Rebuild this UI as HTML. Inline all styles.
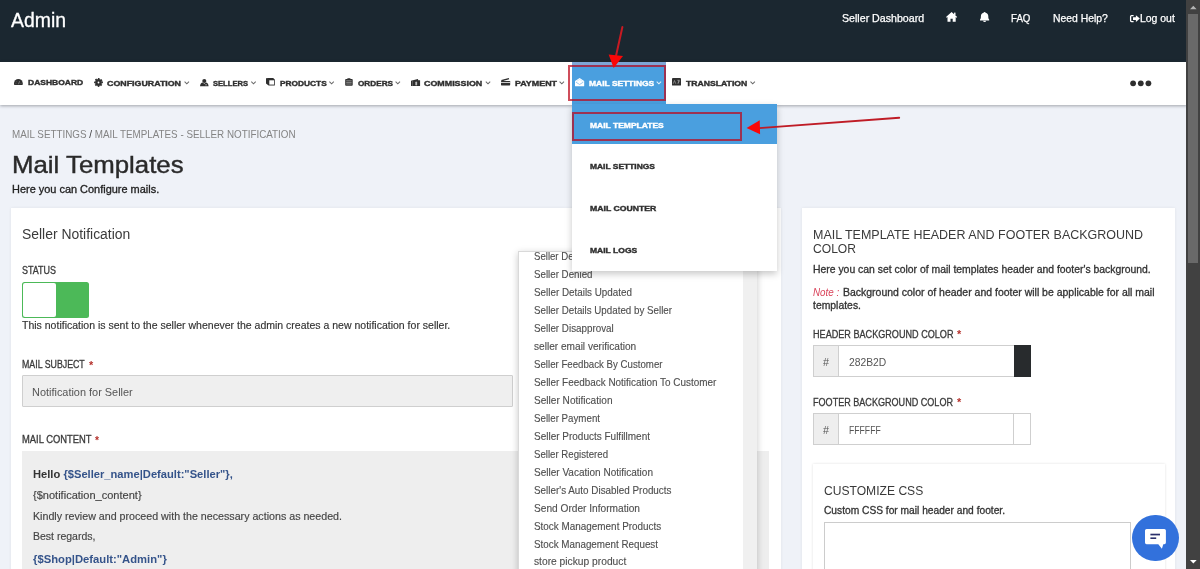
<!DOCTYPE html>
<html>
<head>
<meta charset="utf-8">
<title>Mail Templates</title>
<style>
*{box-sizing:border-box;margin:0;padding:0}
html,body{width:1200px;height:569px;overflow:hidden;background:#eff2f8;font-family:"Liberation Sans",sans-serif;color:#333}
.a{position:absolute}
.t{position:absolute;white-space:nowrap;transform-origin:0 0;line-height:1}
svg{position:absolute;overflow:visible}
</style>
</head>
<body>
<div id="wrap" style="position:absolute;left:0;top:0;width:1200px;height:569px;will-change:transform">
<!-- top bar -->
<div class="a" style="left:0;top:0;width:1187px;height:62px;background:#1b2730"></div>
<!-- nav bar -->
<div class="a" style="left:0;top:62px;width:1187px;height:42.5px;background:#fff;box-shadow:0 1px 3px rgba(40,45,55,.4)"></div>
<div class="a" style="left:572px;top:62px;width:93.7px;height:43px;background:#4a9fdf"></div>
<div class="a" style="left:572px;top:62px;width:93.7px;height:2.8px;background:#7ea6d6"></div>

<!-- left card -->
<div class="a" style="left:10.5px;top:208px;width:770px;height:380px;background:#fff;box-shadow:0 0 3px rgba(0,0,0,.07)"></div>
<!-- toggle -->
<div class="a" style="left:22.2px;top:281.7px;width:66.6px;height:36.4px;background:#4cb958;border-radius:2.5px"></div>
<div class="a" style="left:23.2px;top:282.7px;width:33px;height:34.4px;background:#fff;border-radius:2px"></div>
<!-- subject input -->
<div class="a" style="left:22px;top:374.5px;width:491px;height:32.5px;background:#efefef;border:1px solid #cfcfcf;border-radius:1px"></div>
<!-- content box -->
<div class="a" style="left:22px;top:450.6px;width:747px;height:130px;background:#eee"></div>

<!-- right card -->
<div class="a" style="left:802px;top:208px;width:373.4px;height:380px;background:#fff;box-shadow:0 0 3px rgba(0,0,0,.07)"></div>
<!-- header colour group -->
<div class="a" style="left:813.2px;top:344.5px;width:218px;height:32px;background:#fff;border:1px solid #cfcfcf"></div>
<div class="a" style="left:813.2px;top:344.5px;width:25.5px;height:32px;background:#eee;border:1px solid #cfcfcf"></div>
<div class="a" style="left:1013.7px;top:344.5px;width:17.6px;height:32px;background:#282b2d"></div>
<!-- footer colour group -->
<div class="a" style="left:813.2px;top:413.3px;width:218px;height:32px;background:#fff;border:1px solid #cfcfcf"></div>
<div class="a" style="left:813.2px;top:413.3px;width:25.5px;height:32px;background:#eee;border:1px solid #cfcfcf"></div>
<div class="a" style="left:1013.2px;top:413.3px;width:18px;height:32px;background:#fff;border:1px solid #cfcfcf"></div>
<!-- customize css inner card -->
<div class="a" style="left:812.5px;top:463.6px;width:352px;height:130px;background:#fff;box-shadow:0 0 2.5px rgba(0,0,0,.13)"></div>
<div class="a" style="left:824px;top:522px;width:307px;height:70px;background:#fff;border:1px solid #ccc"></div>

<!-- select list panel -->
<div class="a" style="left:517.8px;top:250.6px;width:239.5px;height:330px;background:#fff;border:1px solid #d9d9d9;box-shadow:0 2px 7px rgba(0,0,0,.22)"></div>
<div class="a" style="left:743px;top:252px;width:14px;height:330px;background:#f0f0f0"></div>

<div class="t" style="left:534px;top:252.02px;font-size:10.3px;color:#4e4e4e;-webkit-text-stroke:.12px #4e4e4e;transform:scaleX(0.9334)">Seller Deactivated</div>
<div class="t" style="left:534px;top:270.02px;font-size:10.3px;color:#4e4e4e;-webkit-text-stroke:.12px #4e4e4e;transform:scaleX(0.9462)">Seller Denied</div>
<div class="t" style="left:534px;top:288.02px;font-size:10.3px;color:#4e4e4e;-webkit-text-stroke:.12px #4e4e4e;transform:scaleX(0.9565)">Seller Details Updated</div>
<div class="t" style="left:534px;top:306.02px;font-size:10.3px;color:#4e4e4e;-webkit-text-stroke:.12px #4e4e4e;transform:scaleX(0.9493)">Seller Details Updated by Seller</div>
<div class="t" style="left:534px;top:324.02px;font-size:10.3px;color:#4e4e4e;-webkit-text-stroke:.12px #4e4e4e;transform:scaleX(0.9544)">Seller Disapproval</div>
<div class="t" style="left:534px;top:342.02px;font-size:10.3px;color:#4e4e4e;-webkit-text-stroke:.12px #4e4e4e;transform:scaleX(0.9817)">seller email verification</div>
<div class="t" style="left:534px;top:360.02px;font-size:10.3px;color:#4e4e4e;-webkit-text-stroke:.12px #4e4e4e;transform:scaleX(0.9395)">Seller Feedback By Customer</div>
<div class="t" style="left:534px;top:378.02px;font-size:10.3px;color:#4e4e4e;-webkit-text-stroke:.12px #4e4e4e;transform:scaleX(0.9630)">Seller Feedback Notification To Customer</div>
<div class="t" style="left:534px;top:396.02px;font-size:10.3px;color:#4e4e4e;-webkit-text-stroke:.12px #4e4e4e;transform:scaleX(0.9797)">Seller Notification</div>
<div class="t" style="left:534px;top:414.02px;font-size:10.3px;color:#4e4e4e;-webkit-text-stroke:.12px #4e4e4e;transform:scaleX(0.9452)">Seller Payment</div>
<div class="t" style="left:534px;top:432.02px;font-size:10.3px;color:#4e4e4e;-webkit-text-stroke:.12px #4e4e4e;transform:scaleX(0.9698)">Seller Products Fulfillment</div>
<div class="t" style="left:534px;top:450.02px;font-size:10.3px;color:#4e4e4e;-webkit-text-stroke:.12px #4e4e4e;transform:scaleX(0.9369)">Seller Registered</div>
<div class="t" style="left:534px;top:468.02px;font-size:10.3px;color:#4e4e4e;-webkit-text-stroke:.12px #4e4e4e;transform:scaleX(0.9730)">Seller Vacation Notification</div>
<div class="t" style="left:534px;top:486.02px;font-size:10.3px;color:#4e4e4e;-webkit-text-stroke:.12px #4e4e4e;transform:scaleX(0.9592)">Seller's Auto Disabled Products</div>
<div class="t" style="left:534px;top:504.02px;font-size:10.3px;color:#4e4e4e;-webkit-text-stroke:.12px #4e4e4e;transform:scaleX(0.9850)">Send Order Information</div>
<div class="t" style="left:534px;top:522.02px;font-size:10.3px;color:#4e4e4e;-webkit-text-stroke:.12px #4e4e4e;transform:scaleX(0.9624)">Stock Management Products</div>
<div class="t" style="left:534px;top:540.02px;font-size:10.3px;color:#4e4e4e;-webkit-text-stroke:.12px #4e4e4e;transform:scaleX(0.9543)">Stock Management Request</div>
<div class="t" style="left:534px;top:557.02px;font-size:10.3px;color:#4e4e4e;-webkit-text-stroke:.12px #4e4e4e;transform:scaleX(0.9948)">store pickup product</div>


<!-- dropdown menu -->
<div class="a" style="left:571.7px;top:104px;width:205.3px;height:167.3px;background:#fff;box-shadow:0 3px 7px rgba(0,0,0,.22)"></div>
<div class="a" style="left:571.7px;top:104px;width:205.3px;height:40.4px;background:#4a9fdf"></div>

<!-- nav icons -->
<svg width="9" height="6" viewBox="0 0 9 6" style="left:14.4px;top:79.1px"><path d="M0 5.200V4.400A4.400 4.400 0 0 1 8.800 4.400V5.200Q8.800 5.900 8.100 5.900H.7Q0 5.900 0 5.200z" fill="#2f2f2f"/><path d="M4.5 5.2L5.6 2.200" stroke="#9a9a9a" stroke-width=".7"/><path d="M1.6 4.300h.8M6.600 4.300h.8M2.400 2.300l.5.5" stroke="#888" stroke-width=".6"/></svg>
<svg width="9" height="9" viewBox="-4.500 -4.500 9 9" style="left:93.6px;top:77.6px"><circle r="2.150" fill="none" stroke="#2f2f2f" stroke-width="2.500"/><circle r="3.700" fill="none" stroke="#2f2f2f" stroke-width="1.500" stroke-dasharray="1.550 1.356" transform="rotate(-15)"/></svg>
<svg width="9" height="7.200" viewBox="0 0 9 7.200" style="left:199.700px;top:78.700px"><circle cx="4.300" cy="2" r="2.050" fill="#2f2f2f"/><path d="M0 7.200C.1 4.900 1.300 3.700 2.700 3.500L4.300 4.800 5.900 3.500C7.300 3.700 8.500 4.900 8.600 7.200z" fill="#2f2f2f"/><rect x="5.100" y="5.400" width="1.900" height=".9" fill="#aaa"/></svg>
<svg width="9" height="7.600" viewBox="0 0 9 7.600" style="left:266px;top:78.100px"><path d="M0 .300L2.400 0h4.800L8.800 1.600V7.400H2.600L0 5.400z" fill="#2f2f2f"/><rect x="3.300" y="2.300" width="4.700" height="4.300" fill="#fff"/></svg>
<svg width="8" height="8" viewBox="0 0 8 8" style="left:345px;top:77.900px"><path d="M1 .9h1.400V.2h3V.9h1.500a.8.800 0 0 1 .8.800V7a.8.800 0 0 1-.8.800H1A.8.800 0 0 1 .2 7V1.700A.8.800 0 0 1 1 .900z" fill="#2f2f2f"/><path d="M1.200 2.800h5.500M1.200 4.400h5.500M1.200 6h5.500" stroke="#c4c4c4" stroke-width=".6"/></svg>
<svg width="9.200" height="7.200" viewBox="0 0 9.200 7.200" style="left:410.700px;top:78.700px"><path d="M0 1.700L6.900 0l.4 1.300H9.100V7.100H0z" fill="#2f2f2f"/><path d="M5.200 2.600v3.900M6.200 3.400h-1.500v1.100h1.100v1.100H4.300" stroke="#e2e2e2" stroke-width=".65" fill="none"/><path d="M1.500 1.900v5.200" stroke="#8a8a8a" stroke-width=".5"/></svg>
<svg width="9.400" height="7.400" viewBox="0 0 9.400 7.400" style="left:500.700px;top:78.100px"><path d="M.2 2.100L7.800 0l.4 1.300L.6 3.400z" fill="#2f2f2f"/><rect x="0" y="2.900" width="9.200" height="4.500" rx=".6" fill="#2f2f2f"/><rect x="0" y="4" width="9.200" height=".8" fill="#f4f4f4"/></svg>
<svg width="9.200" height="8.300" viewBox="0 0 9.200 8.300" style="left:574.800px;top:77.900px"><path d="M0 3.100L4.600 0 9.200 3.100V7.700a.6.600 0 0 1-.6.600H.6A.6.600 0 0 1 0 7.700z" fill="#fff"/><path d="M.8 4.100L4.600 6.500 8.400 4.100" stroke="#6fb3e8" stroke-width=".7" fill="none"/><path d="M1.500 3.500L4.600 1.400 7.700 3.500" stroke="#b5d9f4" stroke-width=".5" fill="none"/></svg>
<svg width="9" height="7.600" viewBox="0 0 9 7.600" style="left:671.800px;top:78.200px"><rect width="9" height="7.600" rx=".5" fill="#2f2f2f"/><path d="M1.200 5.800l1.300-3.300 1.300 3.300M5.300 2.300h2.500M6.500 2.300v3.300M5.300 5.300c1-.4 1.900-1.400 2.300-2.600" stroke="#b0b0b0" stroke-width=".6" fill="none"/></svg>
<!-- chevrons -->
<svg width="1200" height="8" viewBox="0 0 1200 8" style="left:0;top:79px"><g fill="none" stroke="#6a6a6a" stroke-width="1.050"><path d="M184.600 2.700l2.200 2.100 2.200-2.100"/><path d="M251.300 2.700l2.200 2.100 2.200-2.100"/><path d="M329.400 2.700l2.200 2.100 2.200-2.100"/><path d="M395.600 2.700l2.200 2.100 2.200-2.100"/><path d="M485.800 2.700l2.200 2.100 2.200-2.100"/><path d="M559.600 2.700l2.200 2.100 2.200-2.100"/><path d="M750.500 2.700l2.200 2.100 2.200-2.100"/><path d="M656.700 2.700l2.200 2.100 2.200-2.100" stroke="#e4f1fb"/></g></svg>
<!-- more dots -->
<svg width="22" height="7" viewBox="0 0 22 7" style="left:1130.400px;top:80.300px"><circle cx="3.100" cy="3.300" r="2.900" fill="#2f2f2f"/><circle cx="10.800" cy="3.300" r="2.900" fill="#2f2f2f"/><circle cx="18.400" cy="3.300" r="2.900" fill="#2f2f2f"/></svg>
<!-- top-bar icons -->
<svg width="11.200" height="9.800" viewBox="0 0 11.200 9.800" style="left:946.100px;top:12.100px"><path d="M5.600 0L11.200 4.900 10.500 5.700 9.700 5V9.800H6.700V6.700H4.500V9.800H1.500V5L.7 5.700 0 4.900z" fill="#fff"/><rect x="8.100" y=".6" width="1.400" height="2.600" fill="#fff"/></svg>
<svg width="9.200" height="10" viewBox="0 0 9.200 10" style="left:979.700px;top:12.100px"><path d="M4.600 0c.6 0 1 .3 1 .7C7.400 1.100 8.300 2.500 8.300 4.200c0 1.800.2 2.700.9 3.400V8.400H0V7.600C.700 6.900.9 6 .9 4.200c0-1.700.9-3.100 2.700-3.500 0-.4.400-.7 1-.7z" fill="#fff"/><path d="M3.100 8.700h3a1.500 1.400 0 0 1-3 0z" fill="#fff"/></svg>
<svg width="10" height="7.200" viewBox="0 0 10 7.200" style="left:1129.500px;top:15px"><path d="M3.600.6H1.500a.9.900 0 0 0-.9.900v4.200a.9.900 0 0 0 .9.900H3.600" fill="none" stroke="#fff" stroke-width="1.300"/><path d="M3 2.300H5.900V.2L9.900 3.600 5.900 7V4.900H3z" fill="#fff"/></svg>


<div class="t" style="left:11px;top:11.02px;font-size:19.6px;color:#fff;-webkit-text-stroke:.3px #fff;transform:scaleX(0.9902)">Admin</div>
<div class="t" style="left:842.3px;top:14.02px;font-size:10.3px;color:#fff;-webkit-text-stroke:.25px #fff;transform:scaleX(1.0319)">Seller Dashboard</div>
<div class="t" style="left:1011.3px;top:14.02px;font-size:10.3px;color:#fff;-webkit-text-stroke:.25px #fff;transform:scaleX(0.9413)">FAQ</div>
<div class="t" style="left:1053.2px;top:14.02px;font-size:10.3px;color:#fff;-webkit-text-stroke:.25px #fff;transform:scaleX(1.0094)">Need Help?</div>
<div class="t" style="left:1139.9px;top:14.02px;font-size:10.3px;color:#fff;-webkit-text-stroke:.25px #fff;transform:scaleX(1.0128)">Log out</div>
<div class="t" style="left:28px;top:79.02px;font-size:7.7px;font-weight:bold;color:#2f2f2f;-webkit-text-stroke:.4px #2f2f2f;transform:scaleX(1.1057)">DASHBOARD</div>
<div class="t" style="left:107px;top:80.02px;font-size:7.7px;font-weight:bold;color:#2f2f2f;-webkit-text-stroke:.4px #2f2f2f;transform:scaleX(1.1501)">CONFIGURATION</div>
<div class="t" style="left:213px;top:80.02px;font-size:7.7px;font-weight:bold;color:#2f2f2f;-webkit-text-stroke:.4px #2f2f2f;transform:scaleX(0.9868)">SELLERS</div>
<div class="t" style="left:279.5px;top:80.02px;font-size:7.7px;font-weight:bold;color:#2f2f2f;-webkit-text-stroke:.4px #2f2f2f;transform:scaleX(1.0837)">PRODUCTS</div>
<div class="t" style="left:358px;top:80.02px;font-size:7.7px;font-weight:bold;color:#2f2f2f;-webkit-text-stroke:.4px #2f2f2f;transform:scaleX(1.0641)">ORDERS</div>
<div class="t" style="left:424.25px;top:80.02px;font-size:7.7px;font-weight:bold;color:#2f2f2f;-webkit-text-stroke:.4px #2f2f2f;transform:scaleX(1.1556)">COMMISSION</div>
<div class="t" style="left:514.5px;top:80.02px;font-size:7.7px;font-weight:bold;color:#2f2f2f;-webkit-text-stroke:.4px #2f2f2f;transform:scaleX(1.1566)">PAYMENT</div>
<div class="t" style="left:588.5px;top:80.02px;font-size:7.7px;font-weight:bold;color:#fff;-webkit-text-stroke:.4px #fff;transform:scaleX(1.1016)">MAIL SETTINGS</div>
<div class="t" style="left:686px;top:80.02px;font-size:7.7px;font-weight:bold;color:#2f2f2f;-webkit-text-stroke:.4px #2f2f2f;transform:scaleX(1.1232)">TRANSLATION</div>
<div class="t" style="left:590px;top:122.02px;font-size:7.7px;font-weight:bold;color:#fff;-webkit-text-stroke:.4px #fff;transform:scaleX(1.1046)">MAIL TEMPLATES</div>
<div class="t" style="left:590px;top:163.02px;font-size:7.7px;font-weight:bold;color:#2f2f2f;-webkit-text-stroke:.4px #2f2f2f;transform:scaleX(1.0973)">MAIL SETTINGS</div>
<div class="t" style="left:590px;top:205.02px;font-size:7.7px;font-weight:bold;color:#2f2f2f;-webkit-text-stroke:.4px #2f2f2f;transform:scaleX(1.1276)">MAIL COUNTER</div>
<div class="t" style="left:590px;top:247.02px;font-size:7.7px;font-weight:bold;color:#2f2f2f;-webkit-text-stroke:.4px #2f2f2f;transform:scaleX(1.1086)">MAIL LOGS</div>
<div class="t" style="left:12.2px;top:129.02px;font-size:11px;color:#848484;transform:scaleX(0.8945)">MAIL SETTINGS <span style="color:#333">/</span> MAIL TEMPLATES - SELLER NOTIFICATION</div>
<div class="t" style="left:12.4px;top:154.02px;font-size:23.7px;color:#2a2a2a;-webkit-text-stroke:.4px #2a2a2a;transform:scaleX(1.0892)">Mail Templates</div>
<div class="t" style="left:12.4px;top:185.02px;font-size:10.3px;color:#222;-webkit-text-stroke:.3px #222;transform:scaleX(1.0627)">Here you can Configure mails.</div>
<div class="t" style="left:22.25px;top:227.02px;font-size:14px;color:#3a3a3a;transform:scaleX(0.9937)">Seller Notification</div>
<div class="t" style="left:22.25px;top:266.02px;font-size:10px;color:#3a3a3a;-webkit-text-stroke:.3px #3a3a3a;transform:scaleX(0.8955)">STATUS</div>
<div class="t" style="left:22.25px;top:321.02px;font-size:10.3px;color:#333;-webkit-text-stroke:.15px #333;transform:scaleX(1.0208)">This notification is sent to the seller whenever the admin creates a new notification for seller.</div>
<div class="t" style="left:22.25px;top:360.02px;font-size:10px;color:#3a3a3a;-webkit-text-stroke:.3px #3a3a3a;transform:scaleX(0.8799)">MAIL SUBJECT</div>
<div class="t" style="left:88.75px;top:360.02px;font-size:11px;color:#b5312c;font-weight:bold;transform:scaleX(0.9927)">*</div>
<div class="t" style="left:31.75px;top:388.02px;font-size:10.3px;color:#555;transform:scaleX(1.0605)">Notification for Seller</div>
<div class="t" style="left:22.25px;top:435.02px;font-size:10px;color:#3a3a3a;-webkit-text-stroke:.3px #3a3a3a;transform:scaleX(0.9382)">MAIL CONTENT</div>
<div class="t" style="left:95.25px;top:435.02px;font-size:11px;color:#b5312c;font-weight:bold;transform:scaleX(0.9343)">*</div>
<div class="t" style="left:33px;top:469.02px;font-size:11.8px;font-weight:bold;color:#34538a;transform:scaleX(0.9460)"><span style="color:#333">Hello</span> {$Seller_name|Default:"Seller"},</div>
<div class="t" style="left:33px;top:491.02px;font-size:10.3px;color:#444;-webkit-text-stroke:.15px #444;transform:scaleX(1.0716)">{$notification_content}</div>
<div class="t" style="left:33px;top:512.02px;font-size:10.3px;color:#444;-webkit-text-stroke:.15px #444;transform:scaleX(1.0362)">Kindly review and proceed with the necessary actions as needed.</div>
<div class="t" style="left:33px;top:532.02px;font-size:10.3px;color:#444;-webkit-text-stroke:.15px #444;transform:scaleX(1.0188)">Best regards,</div>
<div class="t" style="left:33px;top:554.02px;font-size:11.8px;font-weight:bold;color:#34538a;transform:scaleX(0.9535)">{$Shop|Default:"Admin"}</div>
<div class="t" style="left:813.25px;top:229.02px;font-size:12.7px;color:#3a3a3a;transform:scaleX(0.9845)">MAIL TEMPLATE HEADER AND FOOTER BACKGROUND</div>
<div class="t" style="left:813.25px;top:243.02px;font-size:12.7px;color:#3a3a3a;transform:scaleX(0.9529)">COLOR</div>
<div class="t" style="left:813.25px;top:265.02px;font-size:10.3px;color:#333;-webkit-text-stroke:.3px #333;transform:scaleX(1.0097)">Here you can set color of mail templates header and footer's background.</div>
<div class="t" style="left:813.25px;top:288.02px;font-size:10.3px;color:#d9435a;font-style:italic;transform:scaleX(0.9551)">Note :</div>
<div class="t" style="left:842.5px;top:288.02px;font-size:10.3px;color:#333;-webkit-text-stroke:.3px #333;transform:scaleX(1.0172)">Background color of header and footer will be applicable for all mail</div>
<div class="t" style="left:813.25px;top:301.02px;font-size:10.3px;color:#333;-webkit-text-stroke:.3px #333;transform:scaleX(1.0102)">templates.</div>
<div class="t" style="left:813.25px;top:330.02px;font-size:10px;color:#3a3a3a;-webkit-text-stroke:.3px #3a3a3a;transform:scaleX(0.9096)">HEADER BACKGROUND COLOR</div>
<div class="t" style="left:957px;top:329.02px;font-size:11px;color:#b5312c;font-weight:bold;transform:scaleX(0.9927)">*</div>
<div class="t" style="left:822.5px;top:358.02px;font-size:10px;color:#555;transform:scaleX(1.0787)">#</div>
<div class="t" style="left:848.75px;top:358.02px;font-size:10.3px;color:#555;transform:scaleX(1.0008)">282B2D</div>
<div class="t" style="left:813.25px;top:398.02px;font-size:10px;color:#3a3a3a;-webkit-text-stroke:.3px #3a3a3a;transform:scaleX(0.9063)">FOOTER BACKGROUND COLOR</div>
<div class="t" style="left:957px;top:397.02px;font-size:11px;color:#b5312c;font-weight:bold;transform:scaleX(0.9927)">*</div>
<div class="t" style="left:822.5px;top:426.02px;font-size:10px;color:#555;transform:scaleX(1.0787)">#</div>
<div class="t" style="left:848.75px;top:426.02px;font-size:10.3px;color:#555;transform:scaleX(0.8411)">FFFFFF</div>
<div class="t" style="left:824px;top:484.02px;font-size:13.2px;color:#3a3a3a;transform:scaleX(0.9173)">CUSTOMIZE CSS</div>
<div class="t" style="left:824px;top:506.02px;font-size:10.3px;color:#333;-webkit-text-stroke:.3px #333;transform:scaleX(0.9914)">Custom CSS for mail header and footer.</div>


<!-- annotations -->
<div class="a" style="left:568px;top:64.8px;width:97.7px;height:36.5px;border:2px solid rgba(188,8,28,.72)"></div>
<div class="a" style="left:571.9px;top:112.4px;width:169.8px;height:28.9px;border:2px solid rgba(188,8,28,.72)"></div>
<svg width="1200" height="569" style="left:0;top:0">
  <line x1="622.4" y1="27" x2="616" y2="56" stroke="#c81a22" stroke-width="2" stroke-linecap="round"/>
  <polygon points="613.700,68 608.600,54.600 623,56.100" fill="#fb0707"/>
  <line x1="899.2" y1="117.700" x2="759" y2="128.100" stroke="#bf1c26" stroke-width="1.900" stroke-linecap="round"/>
  <polygon points="746.600,127.900 759.700,120.300 760.100,134.200" fill="#fb0707"/>
</svg>

<!-- chat button -->
<div class="a" style="left:1132.2px;top:514.9px;width:46.4px;height:46.4px;border-radius:50%;background:#3271dc"></div>
<svg width="21" height="20" viewBox="0 0 21 20" style="left:1145px;top:528.6px">
  <path d="M1.600 0H19.300A1.600 1.600 0 0 1 20.900 1.600V13.600A1.600 1.600 0 0 1 19.300 15.200H18.300L16.900 19.700 13.300 15.200H1.600A1.600 1.600 0 0 1 0 13.600V1.600A1.600 1.600 0 0 1 1.600 0z" fill="#fff"/>
  <rect x="5.400" y="4.700" width="9.600" height="1.700" fill="#2b306c"/>
  <rect x="5.400" y="8.400" width="5.800" height="1.600" fill="#2b306c"/>
</svg>

<!-- page scrollbar -->
<div class="a" style="left:1186px;top:0;width:14px;height:569px;background:#414141"></div>
<div class="a" style="left:1188px;top:13.5px;width:10px;height:249px;background:#696969"></div>
<svg width="14" height="569" style="left:1186px;top:0">
  <polygon points="4,9.300 10.600,9.300 7.300,5.800" fill="#b4b4b4"/>
  <polygon points="4,560 10.700,560 7.350,563.600" fill="#fff"/>
</svg>
</div>
</body>
</html>
